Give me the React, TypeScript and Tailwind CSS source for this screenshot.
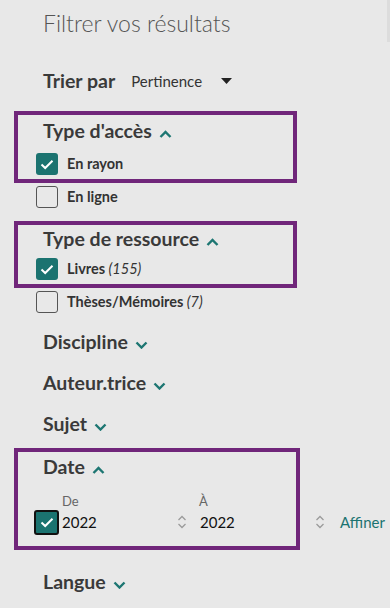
import React from 'react';

const Chevron = ({ up }: { up?: boolean }) => (
    <svg width="13" height="8" viewBox="0 0 13 8" className="ml-[7px] mt-[5px] shrink-0">
        <path d={up ? 'M1.5 7 L6.5 2 L11.5 7' : 'M1.5 1.5 L6.5 6.5 L11.5 1.5'} fill="none" stroke="#1d7672" strokeWidth="2.4" />
    </svg>
);

const Box = ({ checked, dark }: { checked?: boolean; dark?: boolean }) =>
    checked ? (
        <div className={`flex items-center justify-center rounded-[3px] bg-[#1b7370] shrink-0 ${dark ? 'w-[25px] h-[25px] border-2 border-[#111]' : 'w-[22px] h-[22px]'}`}>
            <svg width="14" height="11" viewBox="0 0 14 11">
                <path d="M1.5 5.5 L5.2 9 L12.5 1.8" fill="none" stroke="#fff" strokeWidth="2" />
            </svg>
        </div>
    ) : (
        <div className="w-[22px] h-[22px] rounded-[3px] border border-[#555] shrink-0" />
    );

const Heading = ({ label, up }: { label: string; up?: boolean }) => (
    <div className="flex items-center h-[26px] ml-[25px] text-[19.5px] font-bold text-[#3a3a3a]">
        <span>{label}</span>
        <Chevron up={up} />
    </div>
);

const Option = ({ label, count, checked, className = '' }: { label: string; count?: number; checked?: boolean; className?: string }) => (
    <div className={`flex items-center h-[22px] ml-[18px] gap-[9px] text-[14.5px] text-[#333] ${className}`}>
        <Box checked={checked} />
        <span>
            <span className="font-bold">{label}</span>
            {count !== undefined && <span className="italic"> ({count})</span>}
        </span>
    </div>
);

const Spinner = () => (
    <svg width="10" height="14" viewBox="0 0 10 14" className="shrink-0">
        <path d="M1.5 5 L5 1.5 L8.5 5 M1.5 9 L5 12.5 L8.5 9" fill="none" stroke="#9b9b9b" strokeWidth="1.3" />
    </svg>
);

const App: React.FC = () => {
    return (
        <div className="relative h-[608px] w-full overflow-hidden bg-[#e8e8e8] px-[14px] pt-[8px] font-['Lato',sans-serif]">
            <div className="absolute right-0 top-0 h-[42px] w-[3px] bg-[#dcdcdc]" />
            <h2 className="h-[30px] pl-[29px] text-[23px] leading-[30px] font-light text-[#555]">Filtrer vos résultats</h2>

            {/* Sort */}
            <div className="mt-[28px] flex h-[30px] items-center pl-[29px]">
                <span className="text-[19.5px] font-bold text-[#3a3a3a]">Trier par</span>
                <span className="ml-[16px] text-[15px] text-[#333]">Pertinence</span>
                <svg width="11" height="6" viewBox="0 0 11 6" className="ml-[19px]">
                    <path d="M0 0 H11 L5.5 6 Z" fill="#222" />
                </svg>
            </div>

            {/* Type d'accès */}
            <div className="mt-[15px] w-[283px] border-4 border-[#70267a] pt-[3px] pb-[4px]">
                <Heading label="Type d'accès" up />
                <Option label="En rayon" checked className="mt-[9px]" />
            </div>
            <Option label="En ligne" className="mt-[3px] ml-[22px]" />

            {/* Type de ressource */}
            <div className="mt-[13px] w-[283px] border-4 border-[#70267a] pt-[1px] pb-[4px]">
                <Heading label="Type de ressource" up />
                <Option label="Livres" count={155} checked className="mt-[6px]" />
            </div>
            <Option label="Thèses/Mémoires" count={7} className="mt-[3px] ml-[22px]" />

            <div className="mt-[16px] pl-[4px]"><Heading label="Discipline" /></div>
            <div className="mt-[15px] pl-[4px]"><Heading label="Auteur.trice" /></div>
            <div className="mt-[15px] pl-[4px]"><Heading label="Sujet" /></div>

            {/* Date */}
            <div className="mt-[11px] w-[286px] border-4 border-[#70267a] pt-[2px] pb-[11px]">
                <Heading label="Date" up />
                <div className="mt-[14px] flex h-[14px] items-center text-[13px] leading-[14px] text-[#666]">
                    <span className="ml-[44px] w-[137px]">De</span>
                    <span>À</span>
                </div>
                <div className="mt-[1px] flex h-[26px] w-[370px] items-center text-[15px] text-[#111]">
                    <div className="ml-[16px]"><Box checked dark /></div>
                    <div className="ml-[3px] flex w-[137px] items-center">
                        <span className="w-[115px]">2022</span>
                        <Spinner />
                    </div>
                    <div className="flex w-[141px] items-center">
                        <span className="ml-[1px] w-[115px]">2022</span>
                        <Spinner />
                    </div>
                    <span className="text-[#1b7370]">Affiner</span>
                </div>
            </div>

            <div className="mt-[19px] pl-[4px]"><Heading label="Langue" /></div>
        </div>
    );
};

export default App;
